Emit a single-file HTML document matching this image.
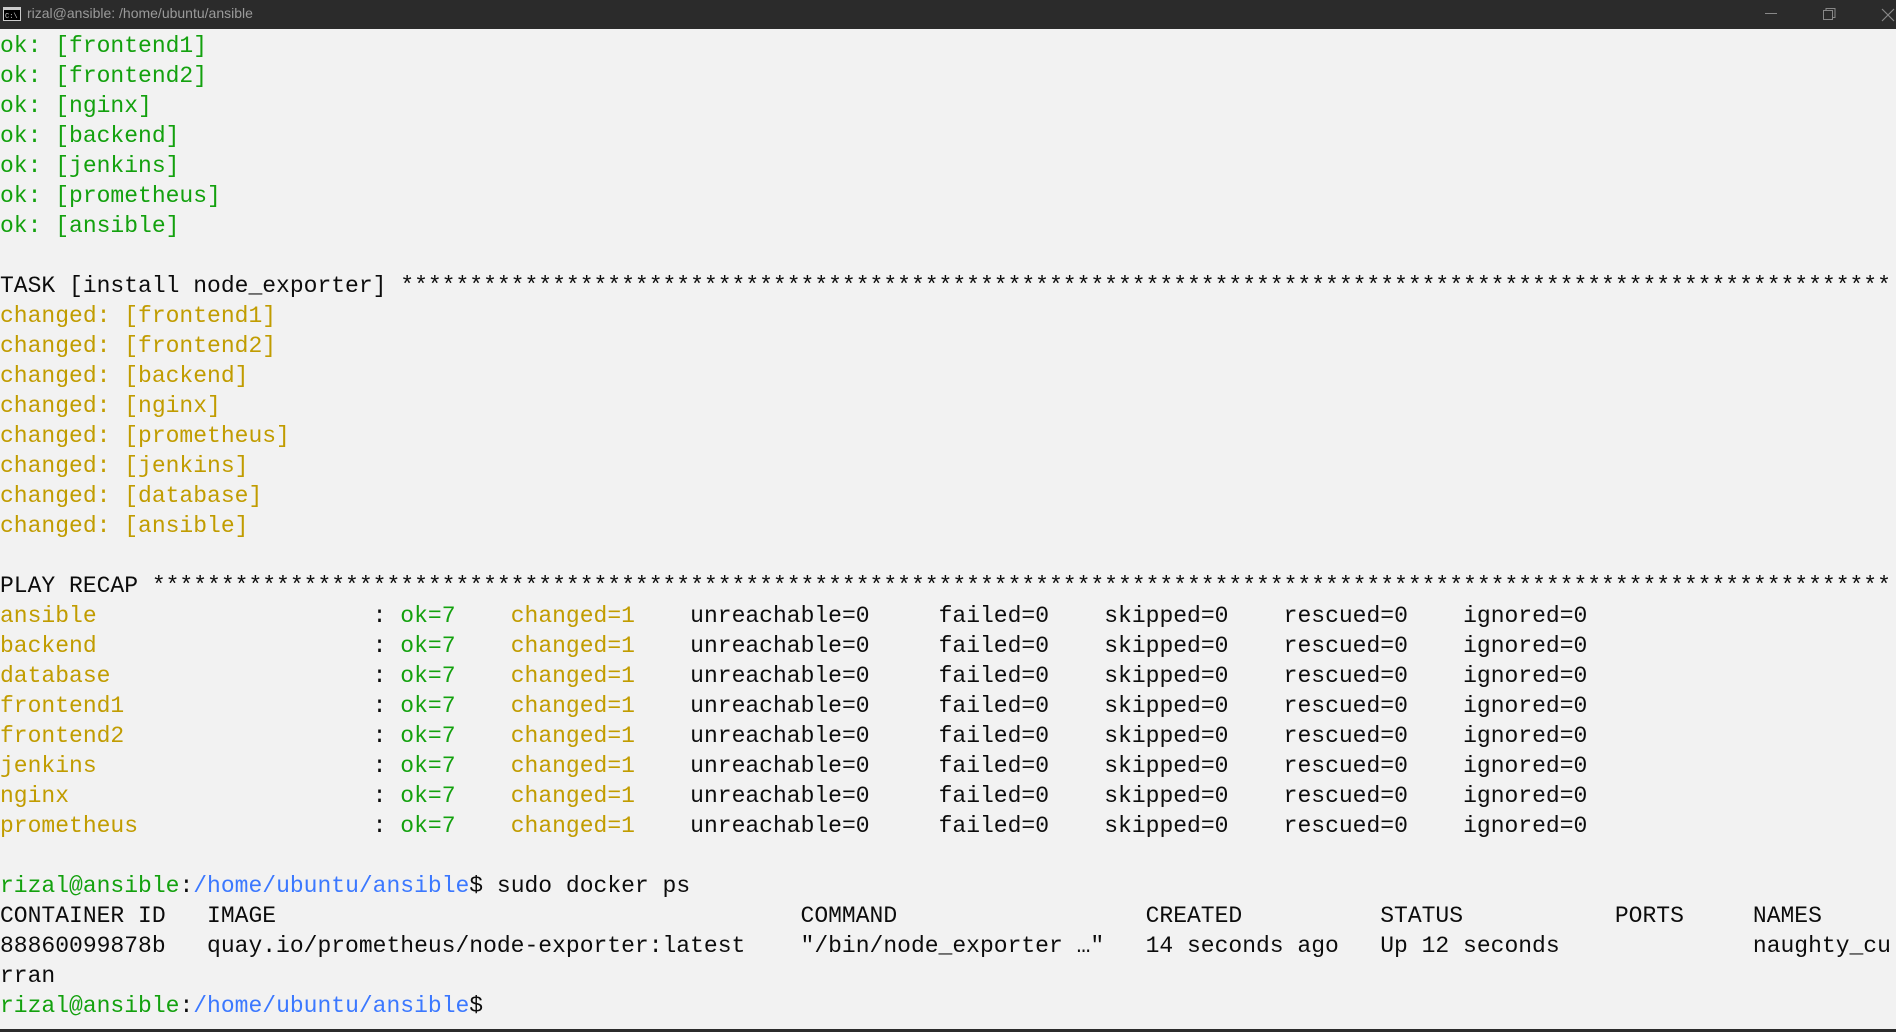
<!DOCTYPE html>
<html><head><meta charset="utf-8"><style>
html,body{margin:0;padding:0;width:1896px;height:1032px;overflow:hidden;background:#f2f2f2;}
.tb{position:absolute;left:0;top:0;width:1896px;height:29px;background:#2b2b2b;}
.tb .t{position:absolute;left:27px;top:5px;font:14px "Liberation Sans",sans-serif;color:#9a9a9a;}
pre{position:absolute;left:0;top:31px;margin:0;font:23px/30px "Liberation Mono",monospace;color:#0c0c0c;white-space:pre;}
.g{color:#13a10e}.y{color:#c19c00}.b{color:#3b78ff}
.bot{position:absolute;left:0;top:1029px;width:1896px;height:3px;background:#2b2b2b;}
</style></head><body>
<div class="tb">
<svg style="position:absolute;left:3px;top:7px" width="18" height="14"><rect x="0.5" y="0.5" width="17" height="13" fill="#000" stroke="#ccc"/><rect x="1" y="1" width="16" height="2" fill="#ccc"/><text x="2" y="11" font-size="7" fill="#ccc" font-family="Liberation Mono">C:\</text></svg>
<span class="t">rizal@ansible: /home/ubuntu/ansible</span>
<svg style="position:absolute;left:1760px;top:6px" width="136" height="20"><line x1="5" y1="7.5" x2="17" y2="7.5" stroke="#888"/><rect x="63.5" y="4.5" width="9" height="9" fill="none" stroke="#888"/><path d="M66 4.5V2.5h9v9h-2" fill="none" stroke="#888"/><path d="M122 3l12 12M134 3l-12 12" stroke="#888" stroke-width="1.2"/></svg>
</div>
<pre><span class="g">ok: [frontend1]
ok: [frontend2]
ok: [nginx]
ok: [backend]
ok: [jenkins]
ok: [prometheus]
ok: [ansible]</span>

TASK [install node_exporter] ************************************************************************************************************
<span class="y">changed: [frontend1]
changed: [frontend2]
changed: [backend]
changed: [nginx]
changed: [prometheus]
changed: [jenkins]
changed: [database]
changed: [ansible]</span>

PLAY RECAP ******************************************************************************************************************************
<span class="y">ansible                    </span>: <span class="g">ok=7</span>    <span class="y">changed=1</span>    unreachable=0     failed=0    skipped=0    rescued=0    ignored=0
<span class="y">backend                    </span>: <span class="g">ok=7</span>    <span class="y">changed=1</span>    unreachable=0     failed=0    skipped=0    rescued=0    ignored=0
<span class="y">database                   </span>: <span class="g">ok=7</span>    <span class="y">changed=1</span>    unreachable=0     failed=0    skipped=0    rescued=0    ignored=0
<span class="y">frontend1                  </span>: <span class="g">ok=7</span>    <span class="y">changed=1</span>    unreachable=0     failed=0    skipped=0    rescued=0    ignored=0
<span class="y">frontend2                  </span>: <span class="g">ok=7</span>    <span class="y">changed=1</span>    unreachable=0     failed=0    skipped=0    rescued=0    ignored=0
<span class="y">jenkins                    </span>: <span class="g">ok=7</span>    <span class="y">changed=1</span>    unreachable=0     failed=0    skipped=0    rescued=0    ignored=0
<span class="y">nginx                      </span>: <span class="g">ok=7</span>    <span class="y">changed=1</span>    unreachable=0     failed=0    skipped=0    rescued=0    ignored=0
<span class="y">prometheus                 </span>: <span class="g">ok=7</span>    <span class="y">changed=1</span>    unreachable=0     failed=0    skipped=0    rescued=0    ignored=0

<span class="g">rizal@ansible</span>:<span class="b">/home/ubuntu/ansible</span>$ sudo docker ps
CONTAINER ID   IMAGE                                      COMMAND                  CREATED          STATUS           PORTS     NAMES
88860099878b   quay.io/prometheus/node-exporter:latest    "/bin/node_exporter …"   14 seconds ago   Up 12 seconds              naughty_cu
rran
<span class="g">rizal@ansible</span>:<span class="b">/home/ubuntu/ansible</span>$</pre>
<div class="bot"></div>
</body></html>
